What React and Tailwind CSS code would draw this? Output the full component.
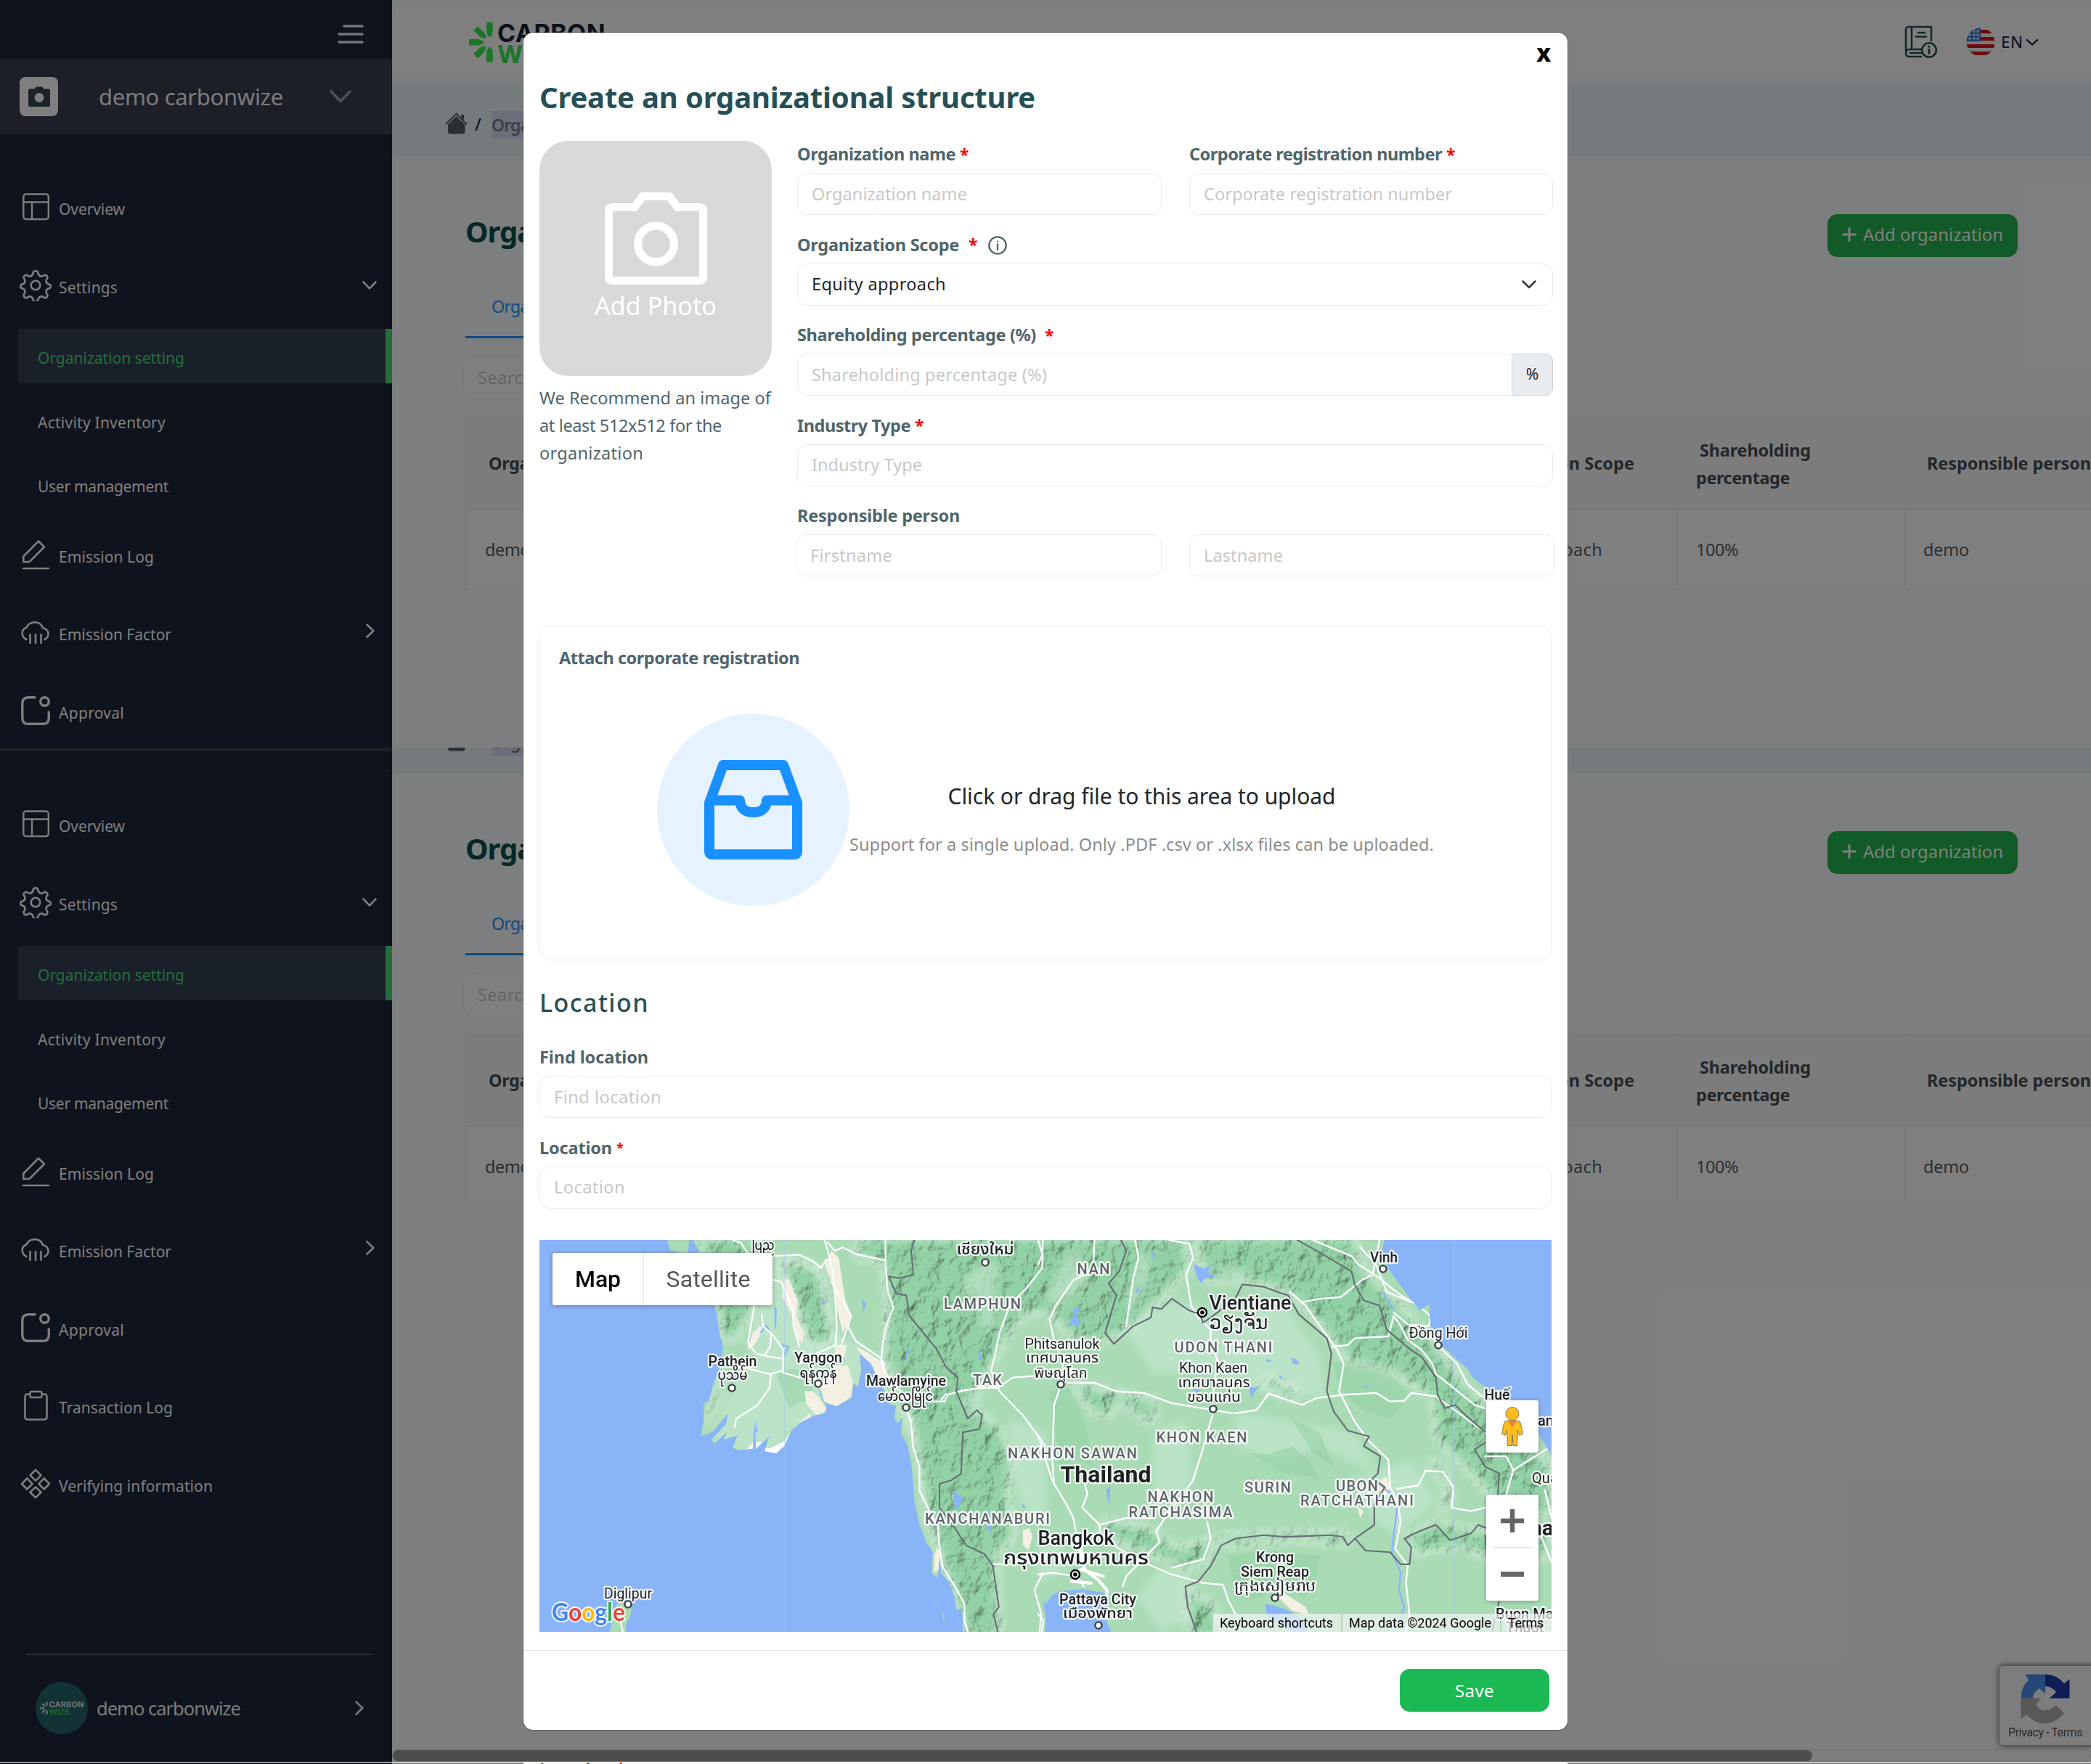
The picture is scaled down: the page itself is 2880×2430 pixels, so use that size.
import React, { useLayoutEffect, useRef, useState } from "react";

/* Text whose tracking is adjusted so that the run fills a given width. */
function Fit({ w, className = "", children }) {
  const ref = useRef(null);
  const [ls, setLs] = useState(0);
  useLayoutEffect(() => {
    const el = ref.current;
    const n = el.textContent.length;
    setLs((w - el.getBoundingClientRect().width) / n);
  }, [w]);
  return (
    <span ref={ref} className={"inline-block shrink-0 whitespace-pre " + className} style={{ letterSpacing: ls + "px" }}>
      {children}
    </span>
  );
}

/* ---------- icons ---------- */
const line = { fill: "none", stroke: "currentColor", strokeLinecap: "round", strokeLinejoin: "round" };

const ChevronDown = ({ className }) => (
  <svg viewBox="0 0 20 12" className={className} {...line} strokeWidth="2.6">
    <path d="M1.5 1.5 10 10.3 18.5 1.5" />
  </svg>
);
const ChevronRight = ({ className }) => (
  <svg viewBox="0 0 12 20" className={className} {...line} strokeWidth="2.6">
    <path d="M1.5 1.5 10.3 10 1.5 18.5" />
  </svg>
);
const OverviewIcon = () => (
  <svg viewBox="0 0 44 44" className="size-11" {...line} strokeWidth="2.4">
    <rect x="5.300" y="4.500" width="34.500" height="34.500" rx="3.500" />
    <path d="M5.300 15.500H39.800M17 15.500V39" />
  </svg>
);
const SettingsIcon = () => (
  <svg viewBox="0 0 44 44" className="size-11" {...line} strokeWidth="2.6">
    <circle cx="22" cy="22" r="6.300" />
    <path d="M19 3.500q3-3 6 0 .5 4.500 3.500 6 2.500 1 6-1.800 4 .3 4 4-2.800 3.500-1.700 6.200 1.200 2.600 5 3.100 2 2.500 0 4.800-4 1-5 3.400-1 2.700 1.700 6.200-.3 4-4 4-3.500-2.800-6-1.800-3 1.400-3.500 5.500-3 3-6 0-.5-4.100-3.500-5.500-2.500-1-6 1.800-3.700 0-4-4 2.700-3.500 1.700-6.200-1-2.400-5-3.400-2-2.300 0-4.800 3.800-.5 5-3.100 1.100-2.700-1.700-6.200 0-3.700 4-4 3.500 2.800 6 1.800 3-1.500 3.500-6z" />
  </svg>
);
const EditIcon = () => (
  <svg viewBox="0 0 44 44" className="size-11" {...line} strokeWidth="2.600">
    <path d="M5 41H40M5.300 32V24.500L26 3.500 34 11.500 13.500 32Z" />
  </svg>
);
const CloudIcon = () => (
  <svg viewBox="0 0 44 44" className="size-11" {...line} strokeWidth="2.600">
    <path d="M9.500 32C2 28 1.500 18 9.500 15.500 13.500 6 28.500 5.500 32 16 41 18 42 28 34.500 32M14.500 25v12M22 25v12M29.500 25v12" />
  </svg>
);
const ApprovalIcon = () => (
  <svg viewBox="0 0 44 44" className="size-11" {...line} strokeWidth="3.400">
    <path d="M21 3.700H12Q3.800 3.700 3.800 12v20q0 8.300 8.200 8.300h20q8.300 0 8.300-8.300V24" />
    <circle cx="34.500" cy="9.500" r="5.800" />
  </svg>
);
const ClipboardIcon = () => (
  <svg viewBox="0 0 44 44" className="size-11" {...line} strokeWidth="2.600">
    <path d="M14.500 6.500H11q-3.500 0-3.500 3.500v28q0 3.500 3.500 3.500h23q3.500 0 3.500-3.500V10q0-3.500-3.500-3.500h-3.500" />
    <rect x="14.500" y="3" width="16" height="8" rx="2" />
  </svg>
);
const DiamondsIcon = () => (
  <svg viewBox="0 0 44 44" className="size-11" {...line} strokeWidth="2.600">
    <path d="M22 3 29.500 10.300 22 17.600 14.500 10.300ZM22 26.400 29.500 33.700 22 41 14.500 33.700ZM10.300 14.500 17.600 22 10.300 29.500 3 22ZM33.700 14.500 41 22 33.700 29.500 26.400 22Z" />
  </svg>
);

const Burst = ({ className }) => (
  <svg viewBox="0 0 33 56" className={className} fill="currentColor">
    <path d="M24 2q0-1.500 1.500-1.500h5.500Q32.700.5 32.700 2v11q0 5-3 8h-2.200q-3.500-4-3.500-9zM24 54q0 1.500 1.500 1.500h5.500q1.700 0 1.700-1.500V43q0-5-3-8h-2.200q-3.500 4-3.500 9zM1 24h9q7 0 11 4-4 4.500-11 4.500H1Q0 32.500 0 31.500v-6.500Q0 24 1 24zM6.500 12 12 6.500 19.500 13q4 4 4.300 9.500-6 .500-10-3zM6.500 44l5.500 6.500L19.500 43q4-4 4.300-9.500-6-.500-10 3z" />
  </svg>
);

/* ---------- sidebar ---------- */
function MenuRow({ icon, label, w, right, className = "" }) {
  return (
    <div className={"flex items-center pl-[27px] text-[#fdfdfd] " + className}>
      {icon}
      <div className="w-[10px] shrink-0" />
      <span className="pt-[6px] text-[21px] leading-8"><Fit w={w}>{label}</Fit></span>
      <div className="grow" />
      {right}
    </div>
  );
}

function Sidebar() {
  return (
    <aside className="flex h-[1577px] w-[540px] shrink-0 flex-col bg-[#1e263a] text-[#ececec]">
      <div className="flex h-[81px] shrink-0 justify-end pt-[34px] pr-[39px]">
        <svg viewBox="0 0 36 26" className="h-[26px] w-9" {...line} strokeWidth="3.6">
          <path d="M9 2H34M2 13H34M2 24H34" />
        </svg>
      </div>
      <div className="flex h-[104px] shrink-0 items-center bg-[#383e4e] pl-[27px]">
        <div className="flex h-[54px] w-[53px] items-center justify-center rounded-lg bg-white">
          <svg viewBox="0 0 30 28" className="h-7 w-[30px]" fill="#3a4850">
            <path fillRule="evenodd" d="M2 3.500h6.500L11 .5h8l2.500 3H28q2 0 2 2V26q0 2-2 2H2q-2 0-2-2V5.500q0-2 2-2zM15 9a6.500 6.500 0 1 0 0 13 6.500 6.500 0 0 0 0-13z" />
          </svg>
        </div>
        <span className="pl-[56px] text-[31px] leading-10 text-[#f4f4f4]"><Fit w={254}>demo carbonwize</Fit></span>
        <svg viewBox="0 0 30 18" className="ml-[64px] h-[18px] w-[30px] text-[#9a9fa8]" {...line} strokeWidth="3.800">
          <path d="M2 2 15 15.500 28 2" />
        </svg>
      </div>
      <div className="h-[27px] shrink-0 border-b border-[#272f42]" />
      <MenuRow className="mt-[19px] h-[108px]" icon={<OverviewIcon />} label="Overview" w={91} />
      <MenuRow className="h-[108px]" icon={<SettingsIcon />} label="Settings" w={81} right={<ChevronDown className="mr-[21px] h-3 w-5" />} />
      <div className="mt-[6px] ml-[25px] flex h-[75px] shrink-0 items-center border-r-[9px] border-[#4cda7c] bg-[#344052] pl-[27px] text-[21px] text-[#4cda7c]">
        <span className="pt-[7px]"><Fit w={202}>Organization setting</Fit></span>
      </div>
      <div className="mt-[9px] flex h-[88px] shrink-0 items-center pt-[3px] pl-[52px] text-[21px] text-[#fdfdfd]">
        <Fit w={176}>Activity Inventory</Fit>
      </div>
      <div className="flex h-[88px] shrink-0 items-center pt-[3px] pl-[52px] text-[21px] text-[#fdfdfd]">
        <Fit w={180}>User management</Fit>
      </div>
      <MenuRow className="-mt-[3px] h-[107.5px]" icon={<EditIcon />} label="Emission Log" w={131} />
      <MenuRow className="h-[107.5px]" icon={<CloudIcon />} label="Emission Factor" w={155} right={<ChevronRight className="mr-[24px] mb-1 h-5 w-3" />} />
      <MenuRow className="h-[107.5px]" icon={<ApprovalIcon />} label="Approval" w={90} />
      <MenuRow className="h-[107.5px]" icon={<ClipboardIcon />} label="Transaction Log" w={157} />
      <MenuRow className="h-[107.5px]" icon={<DiamondsIcon />} label="Verifying information" w={212} />
      <div className="mt-auto mr-[27px] ml-9 h-[2px] shrink-0 bg-[#50566a]" />
      <div className="flex h-[147px] shrink-0 items-center pb-[1px] pl-[49px]">
        <div className="flex size-[72px] items-center justify-center rounded-full bg-[#26646c]">
          <Burst className="mr-[2px] h-[18px] w-[11px] text-[#c4dcd8]" />
          <div className="flex flex-col items-start font-['Inter'] text-[11px] leading-[10px] font-bold">
            <Fit w={48} className="text-[#dce6e6]">CARBON</Fit>
            <Fit w={28} className="text-[#2fce46]">WIZE</Fit>
          </div>
        </div>
        <span className="pl-[12px] text-[25.500px] leading-9 text-[#f4f4f4]"><Fit w={198}>demo carbonwize</Fit></span>
        <div className="grow" />
        <ChevronRight className="mr-[39px] h-5 w-3" />
      </div>
    </aside>
  );
}

/* ---------- page behind the dialog ---------- */
function Flag() {
  return (
    <svg viewBox="0 0 40 40" className="size-10">
      <clipPath id="flagc"><circle cx="20" cy="20" r="19.500" /></clipPath>
      <g clipPath="url(#flagc)">
        <rect width="40" height="40" fill="#f4f4f4" />
        {[3, 13, 23, 33].map((y) => <rect key={y} y={y} width="40" height="5" fill="#d8141c" />)}
        <rect width="20" height="19" fill="#3a7ad8" />
        {[[5, 10], [11, 5], [16, 5], [11, 10], [16, 10], [5, 15], [11, 15], [16, 15]].map(([x, y]) => (
          <path key={x + "-" + y} fill="#fff" d={`M${x} ${y - 2.2}l.7 1.500h1.600l-1.200 1 .5 1.600-1.600-.900-1.600.900.500-1.600-1.200-1h1.600z`} />
        ))}
      </g>
    </svg>
  );
}

function Page() {
  const th = "border-r border-b border-[#ededed] bg-[#f8f8f8] pt-[2px] font-bold text-[#464f56]";
  const td = "border-r border-b border-[#ededed] bg-white text-[#545d63]";
  return (
    <main className="h-[1577px] w-[2340px] bg-[#fbfdff]">
      <header className="flex h-[115px] items-center border-b-[12px] border-[#fafbff] bg-linear-to-b from-[#f5f8fd] via-white via-15% to-white pl-[106px]">
        <Burst className="mt-[12px] h-14 w-[33px] text-[#35ea50]" />
        <div className="mt-[17px] ml-[6px] flex flex-col items-start font-['Inter'] text-[34px] leading-[29px] font-bold">
          <Fit w={149} className="text-[#182336]">CARBON</Fit>
          <Fit w={88} className="text-[#35ea50]">WIZE</Fit>
        </div>
        <svg viewBox="0 0 46 46" className="mt-3 ml-[1789px] size-[46px] text-[#275055]" {...line} strokeWidth="2.600">
          <path d="M23 43H7q-5 0-5-5V6q0-4 4-4H37V21M10 2V33M37 21M2 38q0-5 5-5H23M8 38H23M19 10h9M16 15.500h14" />
          <circle cx="34" cy="34" r="9.800" /><path d="M34 33v5.500M34 29v.2" strokeWidth="3" />
        </svg>
        <div className="mt-3 ml-[39px]"><Flag /></div>
        <span className="mt-3 ml-[8px] text-[22px] font-medium text-[#2a3147]"><Fit w={31}>EN</Fit></span>
        <svg viewBox="0 0 20 12" className="mt-[14px] ml-[3px] h-[11px] w-[18px] text-[#2a3147]" {...line} strokeWidth="2.600"><path d="M2 2 10 9.500 18 2" /></svg>
      </header>
      <div className="flex h-[100px] items-center bg-[#ebf5fb] pl-[73px] text-[23px]">
        <svg viewBox="0 0 32 30" className="mt-[9px] h-[30px] w-8 text-[#545f68]" fill="currentColor">
          <path d="M1 16.500 15.500 1.500 30 16.500" fill="none" stroke="currentColor" strokeWidth="2" />
          <path d="M4 16.500 15.500 5l12 11.500V26q0 3.500-3.500 3.500H7.500Q4 29.500 4 26zM22 3h4v8l-4-4z" />
        </svg>
        <span className="mt-3 ml-[9px] w-[23px] font-medium text-[#20252c]">/</span>
        <span className="mt-[14px] h-[38px] bg-[#d8dcf4] leading-[38px] font-semibold text-[#767f90]"><Fit w={236}>Organization structure</Fit></span>
      </div>
      <div className="flex items-start pt-[80px] pl-[101px]">
        <h1 className="w-[420px] text-[40px] leading-[48px] font-bold text-[#0c504c]"><Fit w={392}>Organization setting</Fit></h1>
        <button className="ml-[1456px] flex h-[59px] w-[262px] items-center rounded-[14px] bg-[#24b44e] pl-[20px] text-[24px] text-[#fdfdfd]">
          <svg viewBox="0 0 20 20" className="mr-[9px] mb-1 size-5" {...line} strokeWidth="3"><path d="M10 1.500v17M1.500 10h17" /></svg>
          <Fit w={193} className="pb-[3px]">Add organization</Fit>
        </button>
      </div>
      <div className="mt-[45px] ml-[101px] flex h-[67px] w-[236px] items-center justify-center border-b-[3px] border-[#2092ff] text-[23.500px] text-[#2296ff]">
        <Fit w={164} className="pb-[16px]">Organization list</Fit>
      </div>
      <div className="mt-[25px] ml-[98px] flex h-[59px] w-[600px] items-center rounded-[14px] border border-[#efefef] bg-white pl-[19px] text-[23.500px] text-[#c9c9c9]">
        <Fit w={77}>Search</Fit>
      </div>
      <div className="mt-6 ml-[101px] grid w-[2400px] grid-cols-[1228px_440px_314px_418px] border-t border-l border-[#ededed] text-[23.500px]">
        <div className={"flex h-[127px] items-center pl-[31px] " + th}><Fit w={218}>Organization name</Fit></div>
        <div className={"flex items-center pl-[153px] " + th}><Fit w={228}>Organization Scope</Fit></div>
        <div className={"flex flex-col items-start justify-center leading-[38px] " + th}>
          <Fit w={153} className="ml-[31px]">Shareholding</Fit>
          <Fit w={129} className="ml-[26px]">percentage</Fit>
        </div>
        <div className={"flex items-center pl-[30px] " + th}><Fit w={226}>Responsible person</Fit></div>
        <div className={"flex h-[110px] items-center pt-[2px] pl-[26px] " + td}><Fit w={62}>demo</Fit></div>
        <div className={"flex items-center pt-[2px] pl-[153px] " + td}><Fit w={184}>Equity approach</Fit></div>
        <div className={"flex items-center pt-[2px] pl-[26px] " + td}><Fit w={58}>100%</Fit></div>
        <div className={"flex items-center pt-[2px] pl-[25px] " + td}><Fit w={63}>demo</Fit></div>
      </div>
    </main>
  );
}

function Screen({ className }) {
  return (
    <div className={"flex w-[2880px] " + className}>
      <Sidebar />
      <Page />
    </div>
  );
}

/* ---------- form pieces ---------- */
const Label = ({ w, children, star, gap = "ml-[6px]", starSize = "text-[23px]", extra }) => (
  <div className="flex h-[52px] items-center pt-[2px] text-[23.500px] font-bold text-[#4f656b]">
    <Fit w={w}>{children}</Fit>
    {star && <span className={"text-[#ff0000] " + starSize + " " + gap}>*</span>}
    {extra}
  </div>
);
const box = "flex h-[58px] items-center rounded-[14px] border-[1.5px] border-[#ececec] bg-white pt-px pl-[19px] text-[23.5px] text-[#c8c8c8]";

function InputBox({ w, children, className = "" }) {
  return <div className={box + " " + className}><Fit w={w}>{children}</Fit></div>;
}

/* ---------- map ---------- */
const road = { fill: "none", stroke: "#ffffff", strokeWidth: 5, strokeLinejoin: "round", strokeLinecap: "round" };
const border = { fill: "none", stroke: "#666f74", strokeWidth: 4.5, strokeLinejoin: "round" };
const WEST = "translate(-23 -18) scale(.4592 .4719)";
const EAST = "translate(687 -18) scale(.4847 .4719)";

const provinces = [
  ["LAMPHUN", 610, 95, 106], ["NAN", 763, 47, 45], ["UDON THANI", 942, 155, 135], ["KHON KAEN", 912, 279, 125],
  ["NAKHON SAWAN", 734, 301, 178], ["TAK", 617, 200, 40], ["KANCHANABURI", 617, 391, 172], ["NAKHON", 883, 361, 91],
  ["RATCHASIMA", 883, 382, 143], ["SURIN", 1003, 348, 64], ["UBON", 1126, 346, 58], ["RATCHATHANI", 1126, 366, 156],
];
const towns = [
  ["เชียงใหม่", 614, 20, 79, 22, 500], ["ပြည်", 308, 14, 31, 20, 500], ["Pathein", 266, 174, 67, 20, 500], ["ပုသိမ်", 266, 193, 41, 19, 500],
  ["Yangon", 384, 169, 66, 20, 500], ["ရန်ကုန်", 384, 190, 51, 19, 500], ["Mawlamyine", 505, 201, 110, 20, 500], ["မော်လမြိုင်", 504, 222, 76, 19, 500],
  ["Diglipur", 122, 494, 66, 20, 400], ["Phitsanulok", 720, 150, 103, 20, 400], ["เทศบาลนคร", 720, 169, 100, 20, 400], ["พิษณุโลก", 718, 190, 73, 20, 400],
  ["Khon Kaen", 928, 183, 94, 20, 400], ["เทศบาลนคร", 929, 203, 99, 20, 400], ["ขอนแก่น", 929, 223, 74, 20, 400],
  ["Vientiane", 979, 96, 113, 27, 500], ["ວຽງຈັນ", 963, 123, 81, 27, 500], ["Vinh", 1163, 31, 38, 20, 500], ["Đồng Hới", 1238, 135, 81, 20, 400],
  ["Huế", 1319, 220, 35, 20, 500], ["Thailand", 780, 334, 125, 32, 700], ["Bangkok", 739, 420, 105, 27, 500], ["กรุงเทพมหานคร", 739, 447, 200, 27, 500],
  ["Krong", 1013, 444, 52, 20, 500], ["Siem Reap", 1013, 464, 94, 20, 500], ["ក្រុងសៀមរាប", 1013, 484, 113, 20, 500],
  ["Pattaya City", 769, 502, 106, 20, 500], ["เมืองพัทยา", 769, 521, 96, 20, 500],
];
const dots = [[614, 31], [265, 204], [384, 198], [505, 231], [122, 502], [718, 199], [928, 233], [1162, 40], [1238, 145], [1013, 493], [770, 531]];

function MapCanvas() {
  return (
    <svg viewBox="0 0 1394 540" className="block h-[540px] w-[1394px]" fontFamily="Roboto, 'Noto Sans', 'Noto Sans Thai', 'Noto Sans Myanmar', 'DejaVu Sans', sans-serif">
      <defs>
        <filter id="relief" x="-5%" y="-5%" width="110%" height="110%" colorInterpolationFilters="sRGB">
          <feGaussianBlur in="SourceGraphic" stdDeviation="7" result="soft" />
          <feTurbulence type="fractalNoise" baseFrequency="0.055 0.04" numOctaves="4" seed="7" result="n" />
          <feColorMatrix in="n" type="matrix" values="0 0 0 0 0 0 0 0 0 0 0 0 0 0 0 1 0 0 0 0" result="h" />
          <feDiffuseLighting in="h" surfaceScale="3.6" diffuseConstant="1.2" lightingColor="#ffffff" result="lit">
            <feDistantLight azimuth="225" elevation="58" />
          </feDiffuseLighting>
          <feBlend in="lit" in2="soft" mode="multiply" result="m" />
          <feComposite in="m" in2="soft" operator="in" />
        </filter>
        <filter id="soften" x="-10%" y="-10%" width="120%" height="120%"><feGaussianBlur stdDeviation="6" /></filter>
        <clipPath id="land">
          <path transform={WEST} d="M433 30 440 66 470 76 495 78 500 30ZM506 30 530 76 560 160 575 228 583 260 590 310 600 345 596 400 575 450 558 510 543 515 543 560 535 612 570 598 616 543 610 575 566 622 574 633 614 598 603 622 645 608 630 645 650 652 690 648 695 560 700 648 718 630 740 612 725 655 760 661 785 640 805 595 835 570 875 550 905 545 912 528 892 490 888 465 905 512 940 524 985 500 992 458 1005 465 1015 420 1010 370 1045 400 1062 435 1085 480 1100 518 1120 522 1115 560 1125 573 1140 555 1133 600 1155 640 1165 690 1170 740 1175 800 1190 870 1210 920 1230 950 1226 1010 1245 1025 1250 960 1255 1010 1280 1040 1295 1080 1300 1115 1318 1120 1322 1200 3300 1200 3300 30ZM285 1095 325 1095 325 1130 310 1160 308 1190 258 1190 270 1150ZM1258 1128 1264 1132 1264 1160Z" />
        </clipPath>
        <clipPath id="coast">
          <path transform={EAST} d="M-1500 30H985L975 80 1000 130 1050 200 1085 245 1110 225 1115 290 1150 350 1220 415 1235 440 1300 490 1350 520 1425 610 1459 670 1500 700V1200H215L190 1140 200 1090 185 1068 125 1058 60 1064 40 1075 15 1110 22 1140 18 1200H-1500Z" />
        </clipPath>
      </defs>
      <rect width="1394" height="540" fill="#8ab4f8" />
      <g clipPath="url(#coast)">
        <g clipPath="url(#land)">
          <rect width="1394" height="540" fill="#a9dbb5" />
          {/* pale lowlands */}
          <g fill="#bbe3c8" filter="url(#soften)">
            <path transform={WEST} d="M690 230 760 80 900 110 930 300 1000 340 1090 400 1100 520 1180 520 1240 600 1170 620 1080 500 960 540 800 600 740 680 560 640 620 480 680 380ZM1350 180 1400 110 1440 130 1400 310 1360 260ZM1460 560 1568 600 1568 850 1500 820 1470 700Z" />
            <path transform={EAST} d="M250 300 380 215 560 250 700 230 800 380 820 500 640 480 450 420 330 430ZM330 600 420 560 440 740 330 830ZM560 540 900 600 960 720 800 640 700 690 560 640ZM880 740 1060 680 1130 800 1020 900 960 860ZM0 920 60 900 80 1000 0 1040ZM340 1000 420 1010 470 1120 350 1180 280 1080Z" />
          </g>
          <g fill="#98d3a7" opacity=".6">
            <path transform={EAST} d="M840 400 890 385 920 365 960 360 990 400 1010 440 1050 480 1030 530 1000 560 930 540 880 500 850 450ZM600 660 650 665 720 640 770 680 800 740 760 725 700 720 650 690ZM720 560 800 600 840 700 780 660ZM540 960 620 940 700 950 800 960 790 1020 760 1080 690 1060 600 1090 560 1080ZM30 480 60 475 90 470 120 530 140 600 160 700 110 680 60 700 50 600Z" />
            <path transform={WEST} d="M760 430 800 415 850 420 870 470 870 520 830 510 800 530ZM860 180 940 300 880 320Z" />
          </g>
          {/* mountains */}
          <g fill="#93d2a6" filter="url(#relief)">
            <path transform={WEST} d="M530 30 700 30 690 240 640 330 602 330 583 240ZM605 400 590 500 545 600 560 520ZM770 95 860 110 900 150 930 345 860 345 800 180Z" />
            <path transform={WEST} d="M1000 30H1700V160L1560 190 1450 330 1400 420 1350 520 1440 600 1470 700 1455 800 1480 900 1420 960 1435 1200 1335 1200 1270 1010 1215 860 1195 740 1165 560 1120 470 1085 380 1090 240 1080 110 1000 90Z" />
            <path transform={EAST} d="M-60 30H420L430 120 360 200 270 290 180 340 100 330 30 250-60 260ZM440 30H900L930 130 1000 200 1110 320 1230 480 1320 560 1459 700 1459 850 1300 800 1230 720 1130 620 1120 500 1000 420 880 390 780 260 700 185 590 160 480 160ZM90 450 200 480 330 500 335 575 290 560 230 510 200 560 150 540ZM180 850 320 880 400 940 510 900 480 980 420 1000 300 950 180 900ZM520 900 640 895 860 890 900 905 880 930 720 915 540 935ZM1040 900 1130 860 1260 890 1300 860 1459 900V960L1300 980 1200 930 1080 960ZM1090 680 1150 690 1180 790 1130 850 1160 760ZM640 430 740 480 720 510 650 470ZM420 1060 500 1100 520 1200 430 1200Z" />
          </g>
          <g fill="#bbe3c8" opacity=".75" filter="url(#soften)">
            <path transform={WEST} d="M1330 150Q1390 80 1430 110L1410 210 1415 300 1375 300 1370 190 1320 200ZM1330 480 1370 500 1360 560 1320 520Z" />
            <path transform={EAST} d="M500 130 540 110 620 150 580 170ZM100 60 150 150 60 240 20 200ZM290 60 320 100 280 230 250 240Z" />
          </g>
          {/* built-up areas and sand */}
          <g fill="#f4efe3">
            <path transform={WEST} d="M785 150 800 155 825 215 820 260 843 310 838 340 822 325 810 260 778 205ZM925 70 948 90 960 170 970 220 987 260 960 310 945 250 930 170 905 110ZM712 290 722 300 695 345 672 360 690 310ZM935 345 972 345 965 380 940 375ZM940 405 975 405 990 450 985 495 945 524 905 512 892 468 910 430ZM870 480 890 500 912 535 880 552 850 515 845 480ZM1000 350 1040 370 1085 400 1088 440 1060 430 1030 395ZM830 570 860 545 868 555 845 570ZM1243 935 1250 950 1252 1000 1232 1010 1235 960ZM1500 885 1520 880 1528 905 1518 945 1500 930Z" />
            <path transform={EAST} d="M970 740 990 730 1000 760 990 785 968 770ZM905 815 925 830 915 850ZM325 775 340 762 355 775 340 805ZM640 1040 700 1070 760 1110 770 1135 720 1120Z" />
          </g>
          <g fill="#ffffff"><path transform={WEST} d="M672 650 690 630 718 628 718 648ZM722 648 745 645 785 625 805 595 785 640 760 662 728 658Z" /></g>
          {/* lakes and rivers */}
          <g fill="#8ab4f8">
            <path transform={WEST} d="M897 205 910 222 900 228ZM1018 210 1030 225 1022 250ZM1290 770 1320 790 1312 810 1298 828ZM1395 820 1408 880 1405 895 1392 880ZM1365 360 1378 380 1368 392ZM755 230 762 240 760 300 755 290ZM700 560 704 600 697 600ZM1103 165 1113 175 1110 185ZM1565 1090 1575 1120 1560 1100ZM1500 808 1510 820 1498 820Z" />
            <path transform={EAST} d="M440 108 470 122 492 110 480 135 505 145 475 150 462 165 450 145ZM102 235 118 240 108 262 122 285 88 290 98 260ZM598 465 612 470 632 465 612 485 605 500ZM718 382 735 388 742 402 725 400ZM193 770 205 755 202 815ZM645 1100 700 1115 745 1140 765 1182 720 1182 650 1135ZM650 385 665 392 648 395ZM683 432 694 437 688 445ZM920 470 940 458 930 470ZM272 195 292 170 285 190ZM435 472 462 475 455 485Z" />
          </g>
          <g fill="none" stroke="#8ab4f8" strokeWidth="5">
            <path transform={EAST} d="M1000 780 1020 820 1010 900 1005 950 1030 1010 1025 1060 1040 1110 1025 1150M980 190 995 220 1010 240M960 740 990 770 1005 780M325 70 328 95" />
            <path transform={WEST} d="M1150 390 1152 365 1168 358M778 345 798 350 785 375M712 310 730 290 740 300" />
          </g>
          {/* roads */}
          <g {...road}>
            <path transform={WEST} d="M630 38 655 48 670 70 690 90 693 240 675 340 700 370 745 380 780 385M718 255 720 290 750 315 782 360 780 420 740 430 660 410 640 410M745 315 742 350 725 375M750 85 830 82 870 100 895 120 910 95M750 155 775 160 810 240 812 290 830 350M905 38 915 70 930 130 938 220 942 290 938 345 870 375 830 400M915 45 935 70 960 60 1000 80 1088 98M925 160 985 260 975 290 955 345M975 290 1000 335 1070 380 1085 400M1088 38 1088 110 1095 190 1112 235 1090 290 1080 340 1075 390 1090 430 1120 470 1160 500 1230 510 1265 510 1275 490 1310 480 1370 470 1425 470M1255 505 1270 488M780 425 830 440 870 440 890 455M745 430 740 470 705 520 640 560 635 585M1150 530 1165 570 1170 640 1190 700 1190 770 1220 830 1245 870 1250 935 1258 990 1290 1040 1325 1100 1325 1150 1335 1182M1560 38 1558 120 1510 180 1460 230 1430 310 1415 380 1405 420 1430 480 1500 550 1568 640M1425 470 1470 440 1540 435M290 1130 295 1160 300 1182M1410 985 1490 985 1568 970M1560 1010 1535 1060 1555 1130 1550 1182" />
            <path transform={EAST} d="M0 40 12 80 0 110M160 38 155 130 100 155 50 230 32 270 45 330 70 400 65 460 45 520 40 680 45 750 80 810 100 850 120 960 135 1000M45 750 38 735 0 610M85 455 160 455 220 480 300 485 380 515 470 530 555 545 620 535 655 487 750 520 790 500 870 490 960 485 1000 510 1040 508 1060 485 1130 495 1190 540 1270 600M370 38 430 50 440 90 420 140 435 230 455 265 490 300 490 340 510 390 495 500 495 550 470 640 440 740 360 850 335 890 345 920 250 1020 240 1050M275 38 285 90 270 150 250 290M715 190 760 230 800 290 850 360 868 400 855 480 900 570 940 625 995 680 1000 760 1020 800 1030 860 1015 940 1050 990 1045 1040 1055 1130 1045 1182M750 220 800 210 860 205 920 155 950 140 970 38M780 38 830 60 890 85 910 110 970 150 1030 200 1080 230 1115 260 1110 290 1050 285 1010 250M835 350 880 345 900 325 995 320 1010 260 1030 290 1050 330 1090 360 1120 400 1130 430 1180 470 1240 520 1270 530M1100 300 1140 350 1190 400 1220 460 1280 510M915 60 960 110 990 190 1060 220M130 740 140 780 125 820 175 870 250 850 330 850M175 870 175 900 230 940 300 980 380 1015 470 1040 525 1045 540 1090 560 1130M480 860 490 910 470 970 380 995M1020 765 1080 755 1100 712 1150 715 1180 760 1175 820 1230 830 1270 820M1270 670 1330 670 1350 710 1330 780M1350 710 1459 640M0 1015 40 1010 110 1020 130 1050M1440 770 1459 850M1420 880 1459 980M0 1130 15 1150 10 1182" />
          </g>
          <g {...road} strokeWidth="9"><path transform={EAST} d="M120 930 130 1000 170 1030 195 1060 195 1080M95 1035 150 1040M120 1000 185 1020" /></g>
          {/* national borders */}
          <g {...border}>
            <path transform={WEST} d="M1175 38 1165 70 1172 140 1130 150 1098 145 1120 195 1150 200 1160 260 1240 355 1270 410 1305 440 1300 480 1335 560 1362 535 1378 550 1370 590 1320 600 1315 720 1285 740 1250 750 1250 820 1290 870 1330 930 1385 955 1410 990 1428 1110 1412 1130 1425 1182" />
            <path transform={EAST} d="M235 38 250 70 230 130 200 165 222 200 190 310 215 342 270 290 320 265 325 235 350 240 380 210 430 245 460 255 468 280 490 265 560 210 580 168 640 175 680 190 710 200 740 255 820 325 833 370 820 480 840 540 880 595 940 612 925 640 972 670 965 720 950 735 985 760 955 810 955 870 900 910 880 930 865 905 830 900 700 905 640 900 560 910 520 930 490 990 455 1035 418 1050 425 1110 450 1182M735 38 800 75 890 130 900 170 925 215 970 230 990 300 1060 360 1090 380 1130 440 1135 490 1155 530 1185 520 1220 555 1270 600M900 910 930 945 1000 950 1030 985 1055 985 1060 935 1040 910 1080 890 1130 870 1170 915 1230 895 1250 870 1275 880M1270 630 1240 650 1270 700 1310 720 1305 800M1270 900 1275 960 1310 1090 1290 1182" />
          </g>
        </g>
      </g>
      <path d="M338 0V540M1260 0V540" stroke="#a6c5f8" strokeWidth="1" opacity=".7" />
      <g textAnchor="middle" paintOrder="stroke" stroke="#ffffff" strokeOpacity=".85" strokeLinejoin="round">
        {provinces.map(([t, x, y, w]) => (
          <text key={t} x={x} y={y} fontSize="20" fontWeight="500" fill="#5f6368" strokeWidth="5" textLength={w}>{t}</text>
        ))}
        {towns.map(([t, x, y, w, s, fw]) => (
          <text key={t + x} x={x} y={y} fontSize={s} fontWeight={fw} fill="#202124" strokeWidth="4.500" textLength={w} lengthAdjust="spacingAndGlyphs">{t}</text>
        ))}
        <g textAnchor="start" fill="#202124" strokeWidth="4.500" fontSize="20">
          <text x="1375" y="256" fontWeight="500">an</text>
          <text x="1367" y="335">Quả</text>
          <text x="1364" y="407" fontSize="30" fontWeight="700">na</text>
          <text x="1317" y="522" fontWeight="500">Buon Ma</text>
          <text x="1331" y="541" fontWeight="500">Thuot</text>
        </g>
      </g>
      <g fill="#fff" stroke="#3c4043" strokeWidth="2.400">
        {dots.map(([x, y]) => <circle key={x + "," + y} cx={x} cy={y} r="4.600" />)}
      </g>
      {[[913, 100], [738, 461]].map(([x, y]) => (
        <g key={x}><circle cx={x} cy={y} r="6" fill="#fff" stroke="#000" strokeWidth="2.400" /><circle cx={x} cy={y} r="2.800" /></g>
      ))}
      <text x="17" y="525" fontFamily="Lato, Roboto, sans-serif" fontSize="35" fontWeight="700" textLength="101" lengthAdjust="spacingAndGlyphs" stroke="#fff" strokeWidth="4" strokeOpacity=".9" paintOrder="stroke" strokeLinejoin="round">
        <tspan fill="#4285f4">G</tspan><tspan fill="#ea4335">o</tspan><tspan fill="#fbbc04">o</tspan><tspan fill="#4285f4">g</tspan><tspan fill="#34a853">l</tspan><tspan fill="#ea4335">e</tspan>
      </text>
    </svg>
  );
}

function MapView() {
  return (
    <div className="relative mt-[29px] h-[540px] w-[1394px] overflow-hidden font-['Roboto']">
      <MapCanvas />
      <div className="absolute top-[18px] left-[18px] flex h-[72px] w-[303px] items-center rounded-[3px] bg-white text-[32px] shadow-[0_1px_6px_rgba(0,0,0,.35)]">
        <div className="flex h-full w-[126px] items-center justify-center border-r border-[#e8e8e8] font-medium text-black"><Fit w={63}>Map</Fit></div>
        <div className="flex grow justify-center text-[#565656]"><Fit w={116}>Satellite</Fit></div>
      </div>
      <div className="absolute top-[221px] left-[1304px] flex h-[72px] w-[72px] items-center justify-center rounded-[3px] bg-white shadow-[0_1px_6px_rgba(0,0,0,.3)]">
        <svg viewBox="0 0 30 54" className="h-[54px] w-[30px]" stroke="#8a7a4a" strokeWidth="1" fill="#fbbc1c">
          <path d="M8 19h14q3.500 0 4.500 4l3 14-4.500 2.500-2.500-7-1 21h-5.500L15 38l-1 15.500H8.500l-1-21-2.500 7L.5 37l3-14Q4.500 19 8 19Z" />
          <path d="M9 19h12l-6 9z" fill="#e8812a" stroke="none" />
          <circle cx="15" cy="9.500" r="9" />
        </svg>
      </div>
      <div className="absolute top-[351px] left-[1304px] flex h-[146px] w-[72px] flex-col items-center rounded-[3px] bg-white shadow-[0_1px_6px_rgba(0,0,0,.3)]">
        <svg viewBox="0 0 32 32" className="mt-5 size-8" fill="#666"><path d="M12.800 0h6.400v12.800H32v6.400H19.200V32h-6.400V19.200H0v-6.400h12.800z" /></svg>
        <div className="mt-5 h-[2px] w-[54px] bg-[#e6e6e6]" />
        <div className="mt-[32px] h-[7px] w-8 bg-[#666]" />
      </div>
      <div className="absolute right-0 bottom-0 flex h-[25px] w-[466px] items-center text-[18px] leading-6 text-black">
        <div className="flex h-full w-[176px] items-center bg-[#f5f5f5]/70 pl-[9px]"><Fit w={156}>Keyboard shortcuts</Fit></div>
        <div className="ml-[2px] flex h-full w-[217px] items-center bg-[#f5f5f5]/70 pl-[9px]"><Fit w={196}>Map data ©2024 Google</Fit></div>
        <div className="ml-[2px] flex h-full grow items-center bg-[#f5f5f5]/70 pl-[9px]"><Fit w={49}>Terms</Fit></div>
      </div>
    </div>
  );
}

/* ---------- dialog ---------- */
function Dialog() {
  return (
    <div className="absolute top-[45px] left-[721px] h-[2338px] w-[1438px] rounded-[13px] bg-white shadow-[0_0_0_1px_rgba(0,0,0,.25)]">
      <button className="absolute top-[8px] right-[23px] text-[33px] leading-[40px] font-extrabold text-black">x</button>
      <div className="px-[22px] pt-[59px]">
        <h2 className="text-[40px] leading-[60px] font-bold text-[#275055]"><Fit w={683}>Create an organizational structure</Fit></h2>
        <div className="mt-[30px] flex h-[668px] items-start">
          <div className="w-[320px] shrink-0">
            <div className="flex h-[324px] flex-col items-center rounded-[40px] bg-[#d9d9d9] pt-[71px] text-white">
              <svg viewBox="0 0 141 127" className="h-[127px] w-[141px]" fill="none" stroke="currentColor" strokeWidth="11" strokeLinejoin="round">
                <path d="M10 20.500H41L52 5.500H89L100 20.500H131Q135.500 20.500 135.500 25V117Q135.500 121.500 131 121.500H10Q5.500 121.500 5.500 117V25Q5.500 20.500 10 20.500Z" />
                <circle cx="70.500" cy="71" r="25" />
              </svg>
              <span className="mt-[9px] text-[34px] leading-[40px]"><Fit w={168}>Add Photo</Fit></span>
            </div>
            <p className="mt-[11px] flex flex-col items-start text-[23.5px] leading-[38px] text-[#4f656b]">
              <Fit w={319}>We Recommend an image of</Fit>
              <Fit w={251}>at least 512x512 for the</Fit>
              <Fit w={143}>organization</Fit>
            </p>
          </div>
          <div className="-mt-2 ml-[35px] w-[1041px] shrink-0">
            <div className="flex h-[124.5px] justify-between">
              <div className="w-[502px]">
                <Label w={218} star>Organization name</Label>
                <InputBox w={214}>Organization name</InputBox>
              </div>
              <div className="w-[501px]">
                <Label w={348} star>Corporate registration number</Label>
                <InputBox w={342}>Corporate registration number</InputBox>
              </div>
            </div>
            <div className="h-[124.5px]">
              <Label w={223} star gap="ml-[13px]" extra={
                <svg viewBox="0 0 26 26" className="ml-[15px] size-[26px]" {...line} strokeWidth="2.300">
                  <circle cx="13" cy="13" r="11.700" /><path d="M13 11.500V19M13 7.300v.3" />
                </svg>
              }>Organization Scope</Label>
              <div className={box}>
                <Fit w={185} className="text-[#212529]">Equity approach</Fit>
                <svg viewBox="0 0 20 12" className="mr-[22px] ml-auto h-3 w-5 text-[#343a40]" {...line} strokeWidth="2.500"><path d="M1.500 1.500 10 10 18.500 1.500" /></svg>
              </div>
            </div>
            <div className="h-[124.5px]">
              <Label w={329} star gap="ml-[12px]">Shareholding percentage (%)</Label>
              <div className="flex">
                <div className={box + " w-[984px] rounded-r-none border-r-0"}><Fit w={324}>Shareholding percentage (%)</Fit></div>
                <div className="flex h-[58px] grow items-center justify-center rounded-r-[10px] border border-[#ced4da] bg-[#e9ecef] text-[21px] text-[#212529]">%</div>
              </div>
            </div>
            <div className="h-[124.5px]">
              <Label w={156} star>Industry Type</Label>
              <InputBox w={152}>Industry Type</InputBox>
            </div>
            <div>
              <Label w={224}>Responsible person</Label>
              <div className="-mr-[3px] -ml-[2px] flex justify-between">
                <InputBox w={113} className="w-[504px]">Firstname</InputBox>
                <InputBox w={109} className="w-[504px]">Lastname</InputBox>
              </div>
            </div>
          </div>
        </div>
        <div className="h-[461px] rounded-[14px] border-[1.5px] border-[#ececec] pt-[28px]">
          <div className="pl-[26px] text-[23.5px] leading-[30px] font-bold text-[#4f656b]"><Fit w={331}>Attach corporate registration</Fit></div>
          <div className="mt-[62px] flex pl-[161px]">
            <div className="flex size-[265px] items-center justify-center rounded-full bg-[#e7f2ff]">
              <svg viewBox="0 0 135 137" className="h-[137px] w-[135px]" fill="none" stroke="#1890ff" strokeWidth="14" strokeLinejoin="round">
                <path d="M7 59 26 7H109L128 59V126Q128 130 124 130H11Q7 130 7 126Z" />
                <path d="M7 55.500H49Q50 72 67.500 72 85 72 86 55.500H128" />
              </svg>
            </div>
            <div className="flex w-[805px] flex-col items-center pt-[94px]">
              <div className="text-[30px] leading-[40px] text-[#212529]"><Fit w={534}>Click or drag file to this area to upload</Fit></div>
              <div className="mt-[31px] text-[23.5px] leading-[30px] text-[#8c8c8c]"><Fit w={805}>Support for a single upload. Only .PDF .csv or .xlsx files can be uploaded.</Fit></div>
            </div>
          </div>
        </div>
        <h3 className="mt-[38px] text-[34px] leading-[40px] font-medium text-[#275055]"><Fit w={151}>Location</Fit></h3>
        <div className="mt-[29px] h-[124.5px]">
          <Label w={150}>Find location</Label>
          <InputBox w={148}>Find location</InputBox>
        </div>
        <div className="h-[124.5px]">
          <Label w={100} star starSize="text-[18px]">Location</Label>
          <InputBox w={98}>Location</InputBox>
        </div>
        <MapView />
      </div>
      <div className="mt-[25px] flex justify-end border-t border-[#dee2e6] pt-[25px] pr-[25px]">
        <button className="flex h-[59px] w-[206px] items-center justify-center rounded-[14px] bg-[#1bb954] text-[24px] text-white"><Fit w={54}>Save</Fit></button>
      </div>
    </div>
  );
}

function Recaptcha() {
  return (
    <div className="absolute top-[2295px] left-[2754px] flex h-[109px] w-[140px] flex-col rounded-[5px] bg-[#fbfbfb] pt-[11px] shadow-[0_0_10px_rgba(70,70,70,1)]">
      <svg viewBox="0 0 68 68" className="ml-[29px] size-[68px]">
        <path d="M7 .5H34V27L26 20Q17 25 17 33.500H.500Q.500 18 11 8.500Z" fill="#4a90f0" />
        <path d="M34 .5Q49 .5 60 13L67.500 7V33.500H40L49 25Q43 17 34 17Z" fill="#1c3aa9" />
        <path d="M.5 33.500H28L21 43Q32 57 49 43L60 54Q34 82 8 56L.5 62Z" fill="#b0b0b0" />
      </svg>
      <span className="ml-[12px] pt-[3px] font-['Roboto'] text-[16px] leading-5 text-[#555]"><Fit w={102}>Privacy - Terms</Fit></span>
    </div>
  );
}

export default function App() {
  return (
    <div className="relative h-[2430px] w-[2880px] overflow-hidden bg-white font-['Noto_Sans','Noto_Sans_Thai',sans-serif]">
      <div className="h-[1030px] overflow-hidden"><Screen /></div>
      <div className="h-[1397px] overflow-hidden"><Screen className="-mt-[180px]" /></div>
      <div className="mt-px flex h-[2px] overflow-hidden text-[23px] leading-[30px] font-bold text-[#4f656b]">
        <div className="w-[540px] bg-[#0f131d]" />
        <div className="w-[181px] bg-[#7e7f81]" />
        <div className="h-[30px] w-[1438px] bg-white pl-[22px]"><div className="-mt-[6px]"><Fit w={100}>Location</Fit> <span className="text-[#ff0000]">*</span></div></div>
        <div className="grow bg-[#7e7f81]" />
      </div>
      <Recaptcha />
      <div className="absolute top-[2410px] left-[540px] h-[17px] w-[2340px] rounded-[9px] border border-[#dcdcdc] bg-[#fafafa]">
        <div className="h-full w-[1955px] rounded-[9px] bg-[#989898]" />
      </div>
      <div className="absolute inset-x-0 top-0 h-[2427px] bg-black/50" />
      <Dialog />
    </div>
  );
}
